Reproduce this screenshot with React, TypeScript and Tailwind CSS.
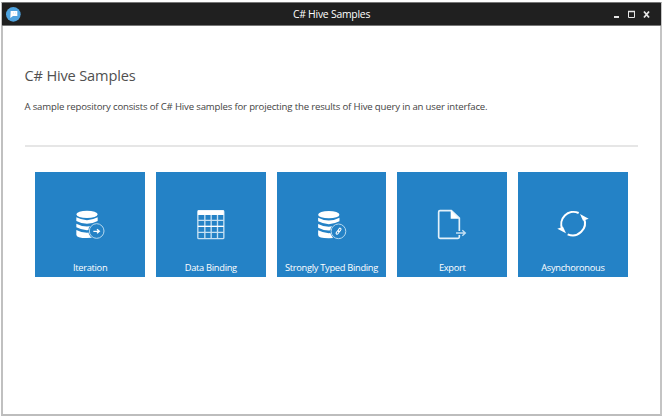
import type { ReactNode } from "react";

function Database() {
  return (
    <>
      <ellipse cx="81" cy="43" rx="32" ry="11" />
      <path d="M49 52q32 17 64 0v11q-32 17-64 0z" />
      <path d="M49 71q32 17 64 0v11q-32 17-64 0z" />
      <path d="M49 90q32 17 64 0v8q0 16-32 16t-32-10z" />
      <circle cx="110" cy="93" r="25" fill="#2482c6" />
      <circle cx="110" cy="93" r="22" fill="#2482c6" stroke="#b5d8ef" strokeWidth="3" />
    </>
  );
}

const tiles: { label: string; icon: ReactNode }[] = [
  {
    label: "Iteration",
    icon: (
      <g>
        <Database />
        <path d="M100 94h17M111 88l7 6-7 6" fill="none" stroke="white" strokeWidth="4" />
      </g>
    ),
  },
  {
    label: "Data Binding",
    icon: (
      <g transform="translate(-2.5 0)">
        <rect x="53" y="32" width="78" height="84" rx="3" fill="none" stroke="#c6e0f2" strokeWidth="4" />
        <path d="M53 31h78v14H53z" />
        <path d="M74 45v71M93 45v71M112 45v71M53 61h78M53 97h78" stroke="#c6e0f2" strokeWidth="4" />
        <path d="M53 79h78" stroke="white" strokeWidth="4" />
      </g>
    ),
  },
  {
    label: "Strongly Typed Binding",
    icon: (
      <g transform="translate(-4.6 0)">
        <g transform="translate(4 1)">
          <Database />
        </g>
        <g fill="none" stroke="white" strokeWidth="3">
          <rect x="114" y="84" width="6" height="11" rx="3" transform="rotate(35 117 90)" />
          <rect x="108" y="92" width="6" height="11" rx="3" transform="rotate(35 111 98)" />
        </g>
      </g>
    ),
  },
  {
    label: "Export",
    icon: (
      <g transform="translate(8 0)">
        <path d="M104 93V54L80 32H46q-4 0-4 4v75q0 4 4 4h54q4 0 4-4v-6" fill="none" stroke="#e4f1fa" strokeWidth="5" />
        <path d="M78 31v25h26z" />
        <path d="M94 99h26M113 91l9 8-9 8" fill="none" stroke="#c6e0f2" strokeWidth="4" />
      </g>
    ),
  },
  {
    label: "Asynchoronous",
    icon: (
      <g transform="translate(6 0)">
        <path d="M101 39A37 37 0 0 0 52 88" fill="none" stroke="white" strokeWidth="6" />
        <path d="M68 103A37 37 0 0 0 117 55" fill="none" stroke="white" strokeWidth="6" />
        <path d="M105 42l26 14-17 6z" />
        <path d="M63 100L37 86l17-6z" />
      </g>
    ),
  },
];

export default function App() {
  return (
    <div className="h-[416px] w-[662px] bg-white pt-[2px] pl-[1px] font-['Open_Sans','Noto_Sans',sans-serif]">
      <div className="flex h-[414px] w-[661px] flex-col border-t border-r-2 border-b-2 border-l-2 border-t-[#777] border-r-[#c4c4c4] border-b-[#bdbdbd] border-l-[#c0c0c0]">
        <header className="-mr-px -ml-px flex h-[23px] shrink-0 items-center border-b border-[#777] bg-[#202020] text-white">
          <div className="flex w-[100px] pl-[4px]">
            <svg width="15" height="15" viewBox="0 0 45 45">
              <circle cx="22" cy="22" r="22" fill="#4fa3df" />
              <path d="M14 12h20v15H21l-8 6z" fill="white" />
              <path d="M22 18h2M28 18h2" stroke="#80bce8" strokeWidth="2" />
            </svg>
          </div>
          <h1 className="flex-1 text-center text-[10.400px] leading-[20px] tracking-[-0.240px]">C# Hive Samples</h1>
          <div className="flex w-[100px] justify-end pr-[9.500px]">
            <svg width="40" height="12" viewBox="0 0 40 12" fill="none" stroke="#e6e6e6">
              <path d="M2 9h5" strokeWidth="2" />
              <path d="M16.500 3.500h6v6h-6z" />
              <path d="M16 3.500h7" strokeWidth="1.500" />
              <path d="M32 3.500l5 6M37 3.500l-5 6" strokeWidth="1.800" />
            </svg>
          </div>
        </header>
        <main className="flex flex-1 flex-col pt-[38px] pr-[22px] pl-[21.500px]">
          <h2 className="h-[24px] text-[14.600px] leading-[23px] tracking-[-0.170px] whitespace-nowrap text-[#505050]">C# Hive Samples</h2>
          <p className="mt-[11px] h-[16px] text-[9.600px] leading-[16px] tracking-[-0.170px] whitespace-nowrap text-[#444]">
            A sample repository consists of C# Hive samples for projecting the results of Hive query in an user interface.
          </p>
          <hr className="mt-[30px] h-[2px] border-0 bg-[#e6e6e6]" />
          <div className="mt-[25px] ml-[10.800px] flex gap-[11px]">
            {tiles.map((tile) => (
              <div
                key={tile.label}
                className="flex h-[105px] w-[109.700px] shrink-0 flex-col items-center bg-[#2482c6] pt-[28px] text-white"
              >
                <svg className="shrink-0" width="60" height="50" viewBox="0 0 180 150" fill="white">
                  {tile.icon}
                </svg>
                <span className="mt-[10px] text-[9.300px] leading-[16px] tracking-[-0.300px] whitespace-nowrap">{tile.label}</span>
              </div>
            ))}
          </div>
        </main>
      </div>
    </div>
  );
}
